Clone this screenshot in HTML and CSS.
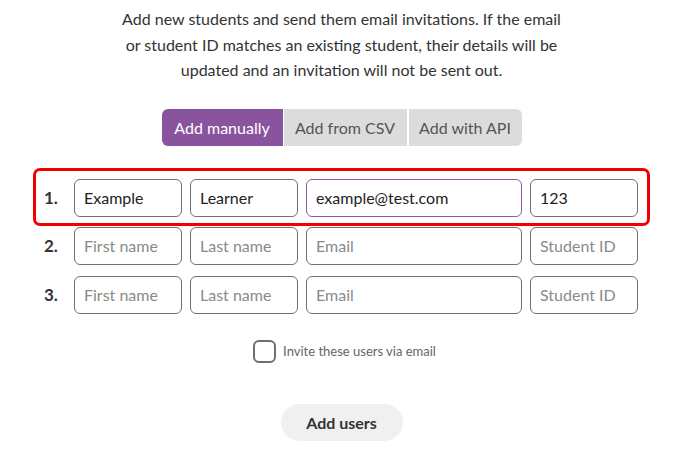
FILE: index.html
```html
<!DOCTYPE html>
<html>
<head>
<meta charset="utf-8">
<link rel="stylesheet" href="styles.css">
</head>
<body>
<main class="page">
  <p class="intro">Add new students and send them email invitations. If the email<br>or student ID matches an existing student, their details will be<br>updated and an invitation will not be sent out.</p>
  <div class="tabs">
    <button class="tab tab-active">Add manually</button>
    <button class="tab tab-csv">Add from CSV</button>
    <button class="tab tab-api">Add with API</button>
  </div>
  <div class="rows">
    <div class="row row-highlight">
      <span class="num">1.</span>
      <input class="field f-first" value="Example">
      <input class="field f-last" value="Learner">
      <input class="field f-email focused" value="example@test.com">
      <input class="field f-id" value="123">
    </div>
    <div class="row row-2">
      <span class="num">2.</span>
      <input class="field f-first" placeholder="First name">
      <input class="field f-last" placeholder="Last name">
      <input class="field f-email" placeholder="Email">
      <input class="field f-id" placeholder="Student ID">
    </div>
    <div class="row row-3">
      <span class="num">3.</span>
      <input class="field f-first" placeholder="First name">
      <input class="field f-last" placeholder="Last name">
      <input class="field f-email" placeholder="Email">
      <input class="field f-id" placeholder="Student ID">
    </div>
  </div>
  <label class="invite">
    <span class="box"></span>
    <span class="invite-text">Invite these users via email</span>
  </label>
  <button class="submit">Add users</button>
</main>
</body>
</html>
```

FILE: styles.css
```css
* { box-sizing: border-box; }
html, body { margin: 0; padding: 0; background: #fff; }
body {
  font-family: "Lato", "Liberation Sans", sans-serif;
  color: #333;
  width: 683px;
  height: 456px;
  overflow: hidden;
}
.page {
  display: flex;
  flex-direction: column;
  align-items: center;
}
.intro {
  margin: 6px 0 0;
  text-align: center;
  font-size: 16px;
  line-height: 25.5px;
  color: #333;
}
.tabs {
  display: flex;
  margin-top: 26px;
  height: 37px;
  gap: 1px;
}
.tab {
  border: none;
  font-family: inherit;
  font-size: 16px;
  color: #555;
  background: #dcdcdc;
  padding: 0;
  height: 37px;
}
.tab-active {
  background: #8a539d;
  color: #fff;
  width: 121px;
  border-radius: 6px 0 0 6px;
}
.tab-csv { width: 124px; border-right: 1px solid #fff; }
.tab-api { width: 113px; border-radius: 0 6px 6px 0; }
.rows {
  margin-top: 22px;
  display: flex;
  flex-direction: column;
}
.row {
  display: flex;
  align-items: center;
  gap: 8px;
  width: 617px;
  padding: 0 9px 0 11px;
}
.row-highlight {
  border: 3px solid #f20000;
  border-radius: 7px;
  padding: 8px 9px 6px 8px;
}
.row-2 { margin-top: 1px; }
.row-3 { margin-top: 11px; }
.num {
  width: 22px;
  font-weight: 700;
  font-size: 17px;
  color: #333;
  text-align: left;
}
.field {
  height: 38px;
  border: 1.5px solid #707070;
  border-radius: 6px;
  padding: 0 9px;
  font-family: inherit;
  font-size: 16px;
  color: #222;
  background: #fff;
  outline: none;
}
.field::placeholder { color: #8a8a8a; }
.f-first, .f-last, .f-id { width: 108px; }
.f-email { width: 216px; }
.focused { border: 1.5px solid #8e5aa6; }
.invite {
  margin-top: 26px;
  display: flex;
  align-items: center;
  gap: 7px;
  margin-left: 6px;
}
.box {
  width: 23px;
  height: 23px;
  border: 2px solid #6e6e6e;
  border-radius: 6px;
}
.invite-text {
  font-size: 13px;
  color: #666;
}
.submit {
  margin-top: 41px;
  width: 122px;
  height: 37px;
  border: none;
  border-radius: 19px;
  background: #f0f0f0;
  font-family: inherit;
  font-weight: 700;
  font-size: 16px;
  color: #333;
}
```
